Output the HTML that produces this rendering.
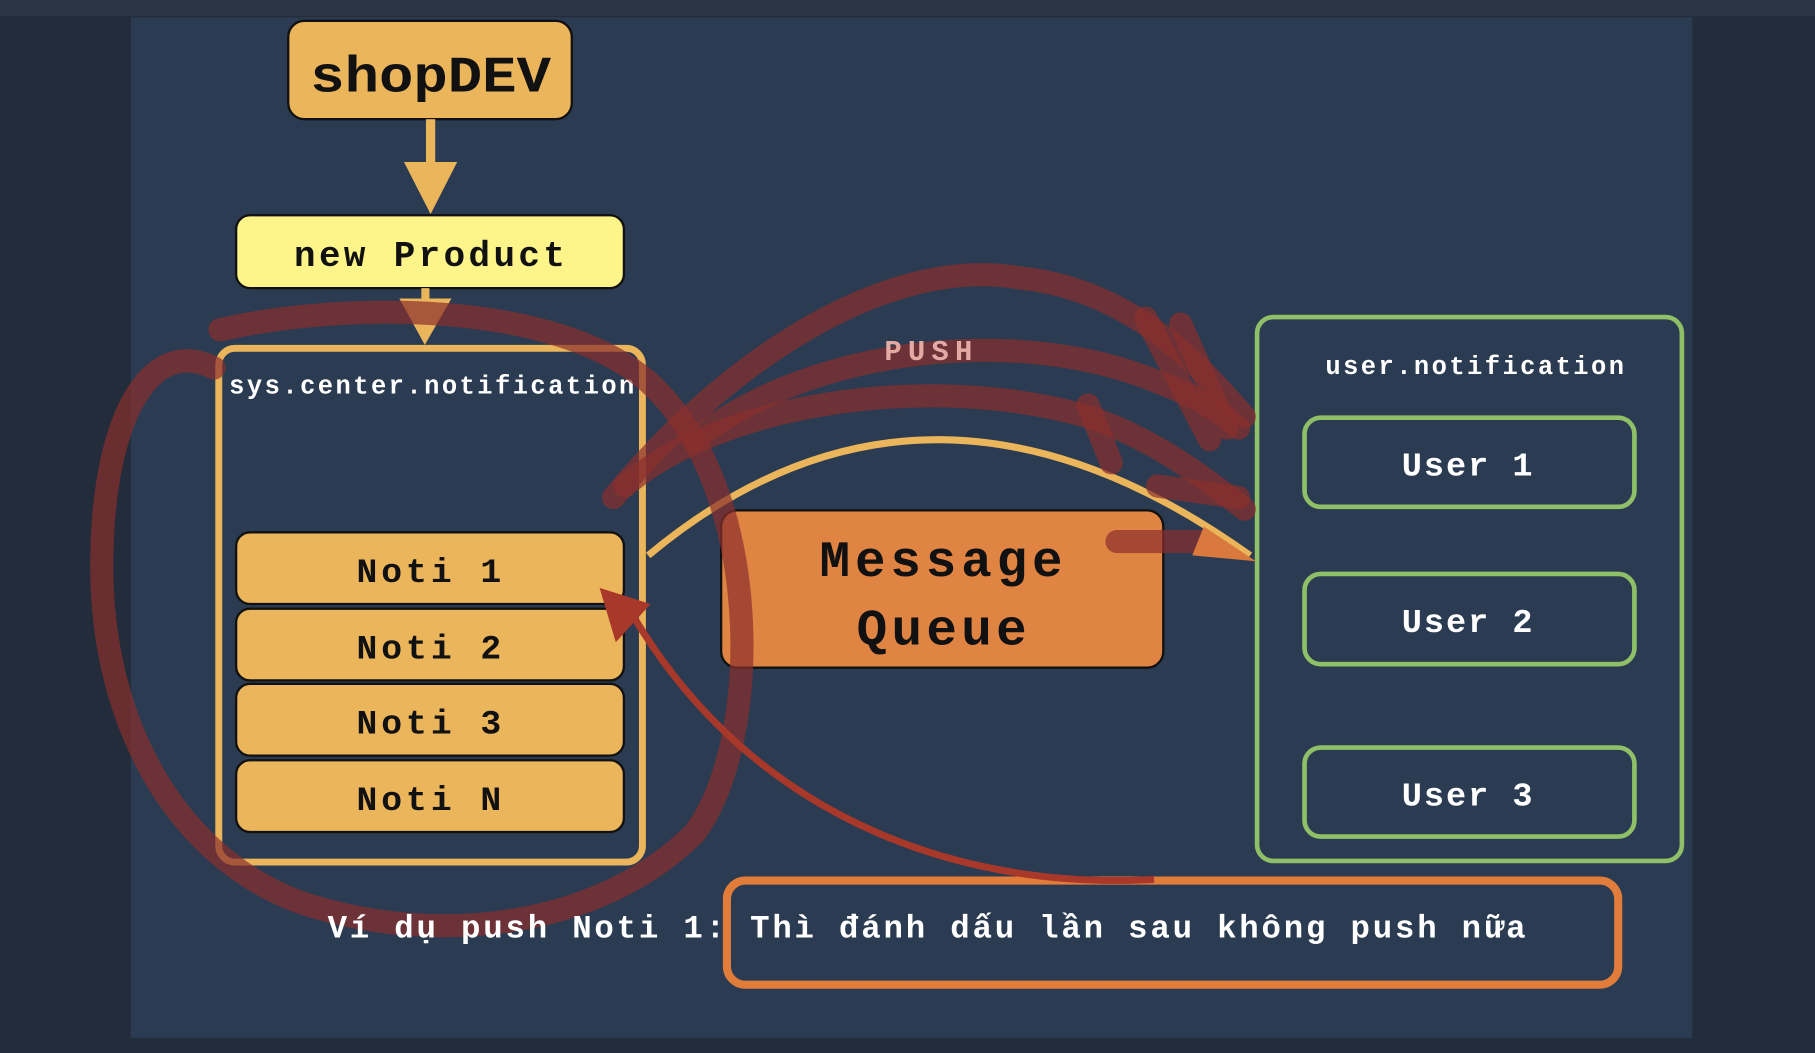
<!DOCTYPE html>
<html><head><meta charset="utf-8"><style>
html,body{margin:0;padding:0;background:#1f2a38;width:1815px;height:1053px;overflow:hidden}
svg{display:block}
text{font-family:"Liberation Mono","DejaVu Sans Mono",monospace;font-weight:bold}
</style></head><body>
<svg width="1815" height="1053" viewBox="0 0 1568 910" preserveAspectRatio="none">
<rect x="0" y="0" width="1568" height="910" fill="#222c3a"/>
<rect x="0" y="0" width="1568" height="14" fill="#2a3442"/>
<rect x="113" y="15" width="1349" height="882" fill="#2b3b51"/>

<!-- shopDEV -->
<rect x="249" y="18" width="245" height="85" rx="14" fill="#ebb55c" stroke="#111" stroke-width="2"/>
<text x="268" y="79" font-size="44" textLength="208" lengthAdjust="spacingAndGlyphs" fill="#111">shopDEV</text>
<rect x="368" y="103" width="8" height="40" fill="#ebb55c"/>
<polygon points="349,140 395,140 372,185" fill="#ebb55c"/>

<!-- new Product -->
<rect x="204" y="186" width="335" height="63" rx="12" fill="#fdf58a" stroke="#111" stroke-width="2"/>
<text x="254" y="230" font-size="31" textLength="234" lengthAdjust="spacing" fill="#111">new Product</text>
<rect x="364" y="249" width="7" height="10" fill="#ebb55c"/>
<polygon points="345,258 390,258 367,298" fill="#ebb55c"/>

<!-- sys.center -->
<rect x="189" y="301" width="366" height="444" rx="14" fill="none" stroke="#ebb55c" stroke-width="6"/>
<text x="198" y="340" font-size="22" textLength="350" lengthAdjust="spacing" fill="#fff">sys.center.notification</text>
<g fill="#ebb55c" stroke="#111" stroke-width="2">
<rect x="204" y="460" width="335" height="62" rx="12"/>
<rect x="204" y="526" width="335" height="62" rx="12"/>
<rect x="204" y="591" width="335" height="62" rx="12"/>
<rect x="204" y="657" width="335" height="62" rx="12"/>
</g>
<g font-size="30" fill="#111">
<text x="308" y="503" textLength="125" lengthAdjust="spacing">Noti 1</text>
<text x="308" y="569" textLength="125" lengthAdjust="spacing">Noti 2</text>
<text x="308" y="634" textLength="125" lengthAdjust="spacing">Noti 3</text>
<text x="308" y="700" textLength="125" lengthAdjust="spacing">Noti N</text>
</g>

<!-- yellow arc -->
<path d="M560,480 Q800,280 1080,480" fill="none" stroke="#ebb55c" stroke-width="6"/>

<!-- Message Queue -->
<rect x="623" y="441" width="382" height="136" rx="14" fill="#e08443" stroke="#111" stroke-width="2"/>
<text x="708" y="498" font-size="44" textLength="210" lengthAdjust="spacing" fill="#111">Message</text>
<text x="740" y="557" font-size="44" textLength="147" lengthAdjust="spacing" fill="#111">Queue</text>

<!-- user.notification -->
<rect x="1086" y="274" width="367" height="470" rx="14" fill="none" stroke="#8fc068" stroke-width="4"/>
<text x="1145" y="323" font-size="22" textLength="258" lengthAdjust="spacing" fill="#fff">user.notification</text>
<g fill="none" stroke="#8fc068" stroke-width="4">
<rect x="1127" y="361" width="285" height="77" rx="14"/>
<rect x="1127" y="496" width="285" height="78" rx="14"/>
<rect x="1127" y="646" width="285" height="77" rx="14"/>
</g>
<g font-size="29" fill="#fff">
<text x="1211" y="411" textLength="113" lengthAdjust="spacing">User 1</text>
<text x="1211" y="546" textLength="113" lengthAdjust="spacing">User 2</text>
<text x="1211" y="696" textLength="113" lengthAdjust="spacing">User 3</text>
</g>

<!-- bottom -->
<rect x="628" y="761" width="770" height="90" rx="16" fill="none" stroke="#e27c3a" stroke-width="7"/>

<!-- red annotations -->
<g fill="none" stroke="#8a2f2c" stroke-opacity="0.7" stroke-width="20" stroke-linecap="round">
<path d="M185,318 C130,290 90,360 88,480 C85,620 150,740 260,780 C380,820 520,800 600,720 C660,640 660,420 560,330 C480,260 300,260 190,285"/>
<path d="M530,430 C620,320 760,220 880,240 C980,250 1040,320 1075,360"/>
<path d="M600,380 C700,300 880,280 1000,330 C1040,345 1060,360 1070,370"/>
<path d="M540,420 C620,350 800,320 940,360 C1000,380 1050,420 1075,440"/>
<path d="M990,275 L1045,380 M1020,280 L1060,370"/>
<path d="M940,350 L960,400 M1000,420 L1070,430"/>
<path d="M965,468 L1040,468"/>
</g>
<path d="M997,760 C820,770 640,700 540,520" fill="none" stroke="#a8382a" stroke-width="6"/>
<polygon points="518,508 562,522 532,555" fill="#a8382a"/>
<polygon points="1040,455 1085,485 1030,480" fill="#d9793e"/>

<text x="764" y="311" font-size="25" textLength="76" lengthAdjust="spacing" fill="#e2aaa3">PUSH</text>
<text x="283" y="810" font-size="28" textLength="1035" lengthAdjust="spacing" fill="#fff">Ví dụ push Noti 1: Thì đánh dấu lần sau không push nữa</text>
</svg>
</body></html>
